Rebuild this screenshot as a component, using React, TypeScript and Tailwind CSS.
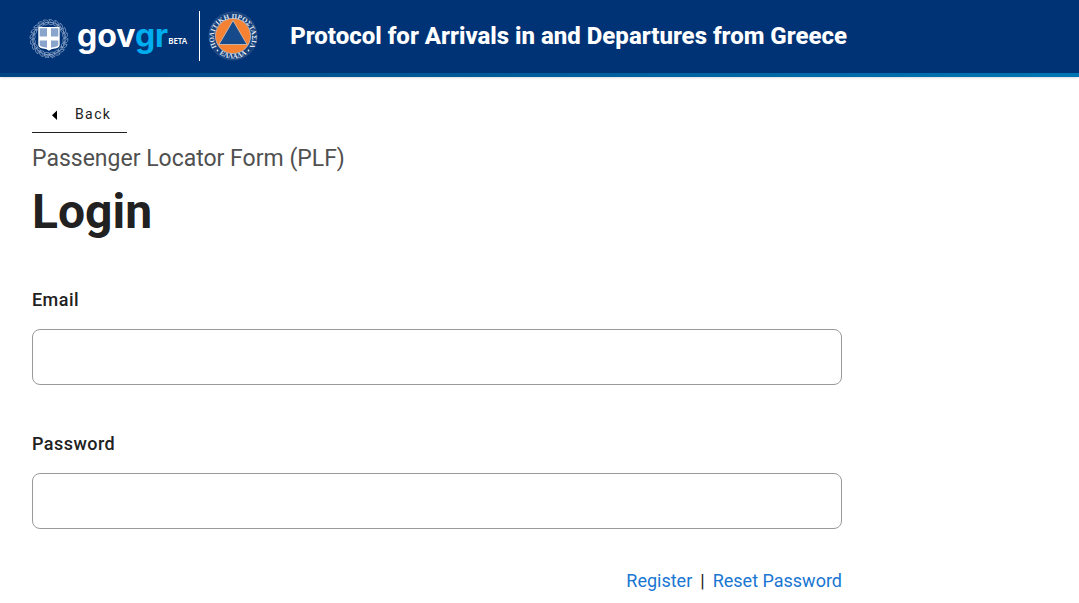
function NationalEmblem() {
  const leaves = Array.from({ length: 20 }, (_, i) => ((i + 0.5) * 360) / 20);
  return (
    <svg viewBox="0 0 40 42" className="mt-1.5 h-[42px] w-10 shrink-0" aria-hidden="true">
      <g fill="none" stroke="#8ea6ca" strokeWidth="0.7">
        {leaves.map((angle) => (
          <g key={angle} transform={`rotate(${angle} 20 20.5)`}>
            <path d="M22.500 4.500C20.500 5 18 4 17 1.800C19.500 1 21.800 2.200 22.500 4.500Z" />
            <path d="M22.500 4.500C21 6.800 19 7 17 6C18.500 4.200 20.500 3.800 22.500 4.500" />
          </g>
        ))}
        <path d="M15 38L20 36L25 38M16 40L20 37L24 40" />
      </g>
      <path d="M9 9H31V24C31 29 27 32 20 34C13 32 9 29 9 24Z" fill="#003375" />
      <path d="M10 9.600H30V27C30 29.500 27 29.800 23 30.200L20 32L17 30.200C13 29.800 10 29.500 10 27Z" fill="#8aa5cc" stroke="#fff" strokeWidth="1.400" />
      <path d="M18 10H22V18.500H30V22.500H22V31L20 32L18 31V22.500H10V18.500H18Z" fill="#fff" />
    </svg>
  );
}

function CivilProtectionBadge() {
  return (
    <svg viewBox="0 0 50 50" className="h-[50px] w-[50px] shrink-0" role="img" aria-label="Πολιτική Προστασία Ελλάδα">
      <defs>
        <path id="badge-top" d="M10 38.200A19 19 0 1 1 40 38.200" />
        <path id="badge-bottom" d="M8 40A23 23 0 0 0 42 40" />
      </defs>
      <circle cx="25" cy="25" r="24" fill="#14407d" stroke="#3a6096" strokeWidth="0.6" />
      <circle cx="25" cy="25" r="17.600" fill="#f58232" stroke="#c3cbd8" strokeWidth="0.7" />
      <path d="M25 9.500L39 33.500H11Z" fill="#164a8b" stroke="#d8c4b8" strokeWidth="0.8" />
      <g fill="#e3e8f0" fontFamily="Liberation Serif, serif" fontWeight="700" fontSize="7" textAnchor="middle">
        <text>
          <textPath href="#badge-top" startOffset="50%">ΠΟΛΙΤΙΚΗ ΠΡΟΣΤΑΣΙΑ</textPath>
        </text>
        <text>
          <textPath href="#badge-bottom" startOffset="50%">ΕΛΛΑΔΑ</textPath>
        </text>
      </g>
      <circle cx="9.500" cy="39.500" r="0.900" fill="#e3e8f0" />
      <circle cx="40.500" cy="39.500" r="0.900" fill="#e3e8f0" />
    </svg>
  );
}

function Field({ id, label, type }: { id: string; label: string; type: string }) {
  return (
    <div className="flex flex-col gap-[15px]">
      <label htmlFor={id} className="text-lg leading-7 font-medium tracking-wide">
        {label}
      </label>
      <input id={id} type={type} className="h-14 w-full rounded-lg border border-[#999999] bg-white px-4 text-lg" />
    </div>
  );
}

export default function App() {
  return (
    <div className="font-[Roboto,sans-serif] text-[#212121]">
      <header className="bg-[#003375] shadow-sm">
        <div className="flex h-[73px] items-center px-[29px] pb-0.5">
          <a href="#home" className="flex items-center gap-2 text-white">
            <NationalEmblem />
            <span className="flex items-center">
              <span className="font-[Inter,sans-serif] text-[32px] leading-10 font-bold">
                gov<span className="text-[#00aeef]">gr</span>
              </span>
              <span className="pt-2.5 font-['Noto_Sans',sans-serif] text-[8px] font-semibold">BETA</span>
            </span>
          </a>
          <span className="mr-2 ml-3 h-[50px] w-px bg-white" />
          <CivilProtectionBadge />
          <h2 className="ml-8 text-2xl font-extrabold text-white">Protocol for Arrivals in and Departures from Greece</h2>
        </div>
        <div className="h-1 bg-linear-to-r from-[#004583] to-[#0075b3]" />
      </header>

      <main className="px-8 pt-5">
        <button type="button" className="flex h-9 items-center gap-4 border-b border-[#212121] pr-4 pb-0.5 pl-[19px] text-sm tracking-widest">
          <svg viewBox="0 0 8 12" className="h-3 w-2" aria-hidden="true">
            <path d="M6 2.500V12L1 7.250Z" fill="#000" />
          </svg>
          Back
        </button>
        <h1 className="mt-2">
          <span className="block text-[23px] leading-9 text-[#505050]">Passenger Locator Form (PLF)</span>
          <span className="mt-[3px] block text-5xl leading-16 font-bold">Login</span>
        </h1>
        <form className="mt-[42px] flex max-w-[810px] flex-col gap-[45px]">
          <Field id="email" label="Email" type="email" />
          <Field id="password" label="Password" type="password" />
          <p className="-mt-1 flex justify-end gap-2 text-lg leading-[22px]">
            <a href="#register" className="text-[#1976d2]">Register</a>
            <span>|</span>
            <a href="#reset" className="text-[#1976d2]">Reset Password</a>
          </p>
        </form>
      </main>
    </div>
  );
}
